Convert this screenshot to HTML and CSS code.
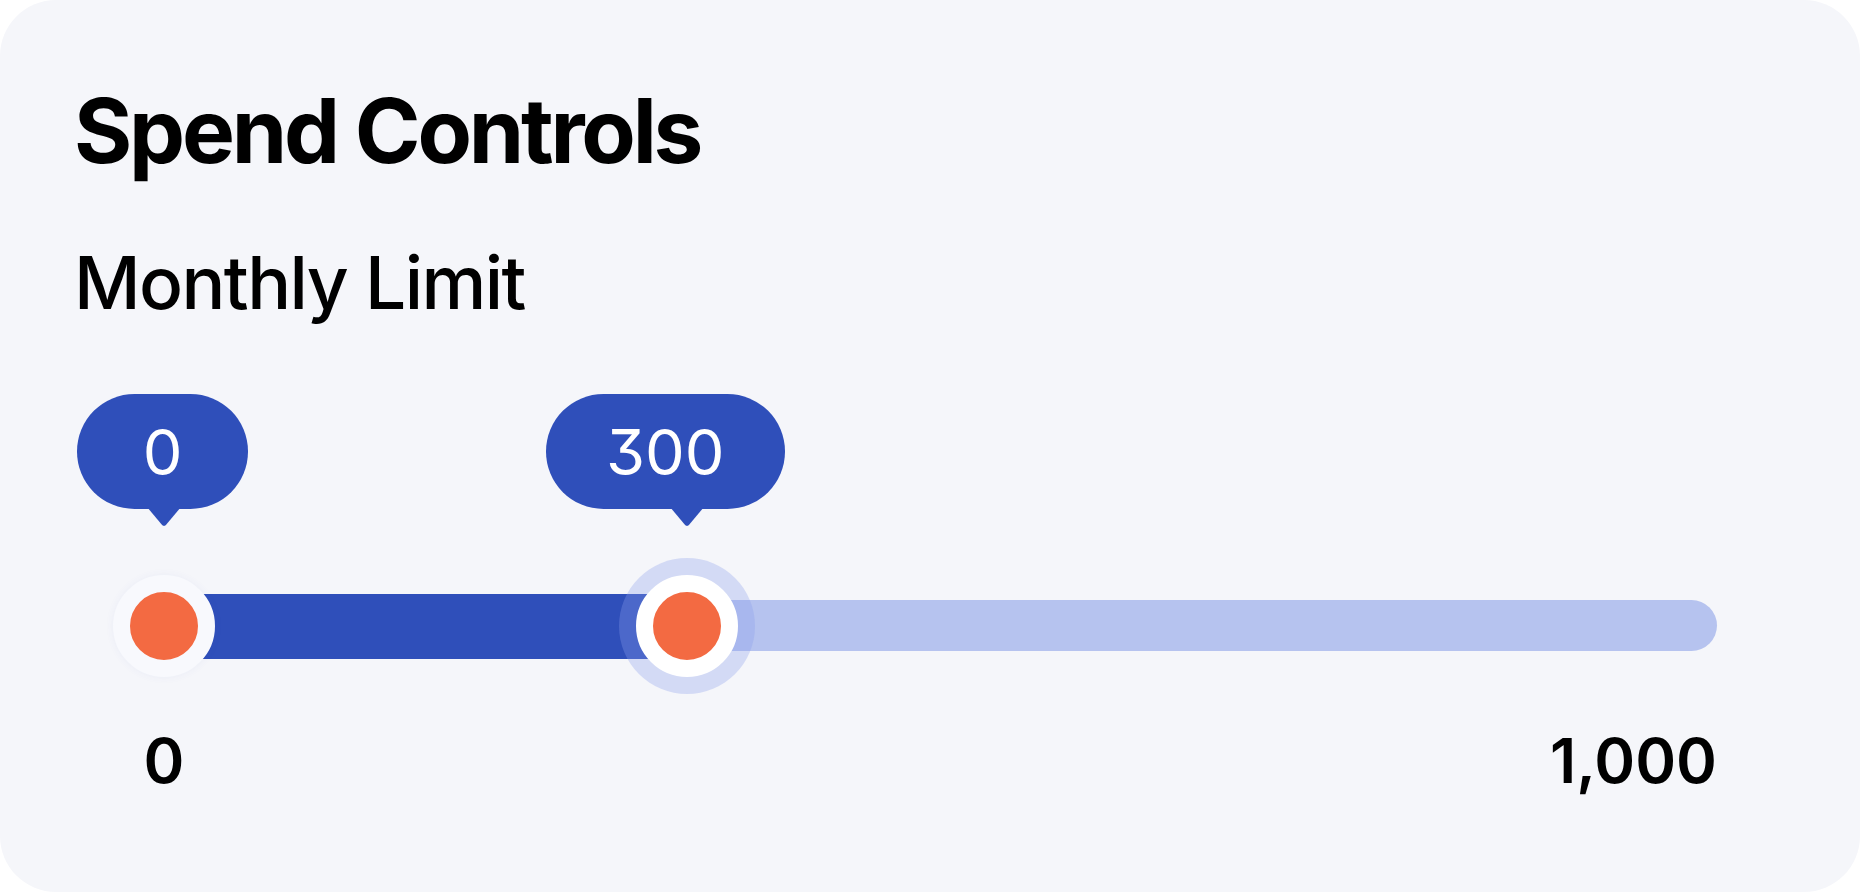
FILE: index.html
```html
<!DOCTYPE html>
<html lang="en">
<head>
<meta charset="utf-8">
<title>Spend Controls</title>
<link rel="stylesheet" href="styles.css">
</head>
<body>
  <section class="card">
    <h1 class="title">Spend Controls</h1>
    <h2 class="subtitle">Monthly Limit</h2>

    <div class="slider">
      <div class="rail"></div>
      <div class="fill" style="left: 26px; width: 523px;"></div>

      <div class="tip" style="left: 26px;">
        <div class="bubble" style="left: -87px;">0</div>
        <div class="arrow"></div>
      </div>
      <div class="tip" style="left: 549px;">
        <div class="bubble" style="left: -141px;">300</div>
        <div class="arrow"></div>
      </div>

      <div class="thumb thumb-min" style="left: 26px;"></div>
      <div class="thumb thumb-active" style="left: 549px;"></div>
    </div>

    <div class="scale">
      <span class="scale-min">0</span>
      <span class="scale-max">1,000</span>
    </div>
  </section>
</body>
</html>
```

FILE: styles.css
```css
* {
  box-sizing: border-box;
}

html, body {
  margin: 0;
  padding: 0;
  background: #ffffff;
}

body {
  font-family: Inter, "Noto Sans", "Liberation Sans", sans-serif;
  color: #000;
}

.card {
  width: 1860px;
  height: 892px;
  background: #f5f6fa;
  border-radius: 56px;
  padding: 86px 0 0 74px;
  overflow: hidden;
}

.title {
  margin: 0;
  font-size: 89px;
  line-height: 89px;
  font-weight: 700;
  letter-spacing: -3.2px;
}

.subtitle {
  margin: 71px 0 0;
  font-size: 73px;
  line-height: 73px;
  font-weight: 500;
  letter-spacing: -1.6px;
}

.slider {
  position: relative;
  margin: 75px 0 0 64px;
  width: 1579px;
  height: 336px;
}

.rail {
  position: absolute;
  left: 0;
  right: 0;
  top: 206px;
  height: 51px;
  border-radius: 26px;
  background: #b6c3ef;
}

.fill {
  position: absolute;
  top: 200px;
  height: 65px;
  background: #2f4fba;
}

.tip {
  position: absolute;
  top: 0;
  width: 0;
  height: 132px;
}

.bubble {
  position: absolute;
  top: 0;
  height: 115px;
  min-width: 171px;
  padding: 0 60px;
  border-radius: 58px;
  background: #2f4fba;
  color: #fff;
  font-size: 63px;
  line-height: 62px;
  font-weight: 400;
  font-feature-settings: "cv09" 1;
  display: flex;
  align-items: center;
  justify-content: center;
  white-space: nowrap;
}

.arrow {
  position: absolute;
  top: 113px;
  left: -17px;
  width: 34px;
  height: 19px;
  background: #2f4fba;
  clip-path: polygon(0 0, 100% 0, 55% 96%, 50% 100%, 45% 96%);
}

.thumb {
  position: absolute;
  top: 232px;
  width: 102px;
  height: 102px;
  margin: -51px 0 0 -51px;
  border-radius: 50%;
  background: #f36a42;
  border: 17px solid #ffffff;
}

.thumb-min {
  border-color: #f8f9fd;
  box-shadow: 0 0 8px rgba(60, 80, 190, 0.06);
}

.thumb-active {
  box-shadow: 0 0 0 17px rgba(140, 160, 235, 0.32);
}

.scale {
  display: flex;
  justify-content: space-between;
  margin-left: 64px;
  width: 1579px;
  font-size: 62px;
  line-height: 62px;
  font-weight: 600;
}

.scale-min {
  width: 52px;
  text-align: center;
}
```
